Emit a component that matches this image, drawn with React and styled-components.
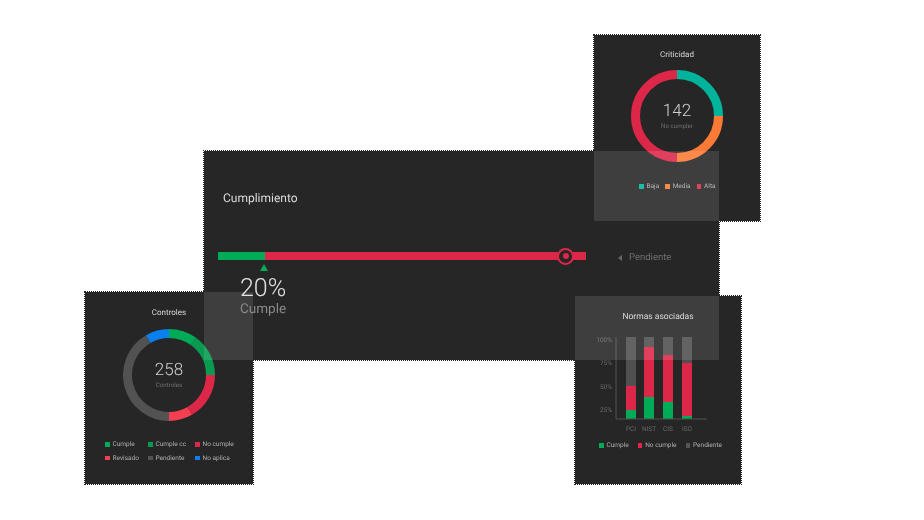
import React from 'react';
import styled, { createGlobalStyle, css } from 'styled-components';

const Global = createGlobalStyle`
  html, body { margin: 0; padding: 0; background: #fff; }
  body {
    font-family: Roboto, "Liberation Sans", sans-serif;
    text-rendering: geometricPrecision;
  }
`;

const soft = css`
  filter: blur(0.3px);
`;

const Stage = styled.div`
  position: relative;
  width: 924px;
  height: 520px;
  overflow: hidden;
  background: #fff;
`;

const Panel = styled.section`
  position: absolute;
  left: ${p => p.$x}px;
  top: ${p => p.$y}px;
  width: ${p => p.$w}px;
  height: ${p => p.$h}px;
  box-sizing: border-box;
  background: #262626;
  outline: 1px dotted #262626;
  display: flex;
  flex-direction: column;
`;

const Glass = styled.div`
  position: absolute;
  left: ${p => p.$x}px;
  top: ${p => p.$y}px;
  width: ${p => p.$w}px;
  height: ${p => p.$h}px;
  background: rgba(255, 255, 255, 0.115);
`;

/* main panel */
const MainBody = styled.div`
  display: flex;
  flex-direction: column;
  padding: 40px 0 0 14px;
`;
const MainTitle = styled.h2`
  ${soft}
  margin: 0 0 0 5px;
  font-size: 12px;
  line-height: 14px;
  font-weight: 400;
  color: #dcdcdc;
`;
const BarRow = styled.div`
  display: flex;
  align-items: flex-start;
  margin-top: 47px;
`;
const Track = styled.div`
  position: relative;
  display: flex;
  width: 368px;
  height: 8px;
  background: #dc2749;
`;
const Done = styled.div`
  width: 47px;
  background: #00ab57;
`;
const Pointer = styled.div`
  position: absolute;
  left: 42px;
  top: 12px;
  width: 0;
  height: 0;
  border-left: 4px solid transparent;
  border-right: 4px solid transparent;
  border-bottom: 7px solid #00ab57;
`;
const Marker = styled.div`
  position: absolute;
  left: 339px;
  top: -4.5px;
  width: 17px;
  height: 17px;
  box-sizing: border-box;
  border-radius: 50%;
  background: #262626;
  border: 2px solid #dc2749;
  display: flex;
  align-items: center;
  justify-content: center;
  &::after {
    content: '';
    width: 6px;
    height: 6px;
    border-radius: 50%;
    background: #dc2749;
  }
`;
const Pending = styled.div`
  ${soft}
  display: flex;
  align-items: center;
  gap: 7px;
  margin: -0.5px 0 0 32px;
  font-size: 9.5px;
  line-height: 12px;
  color: #6f6f6f;
  &::before {
    content: '';
    border-top: 3px solid transparent;
    border-bottom: 3px solid transparent;
    border-right: 4px solid #666;
  }
`;
const Stat = styled.div`
  ${soft}
  position: relative;
  z-index: 1;
  display: flex;
  flex-direction: column;
  gap: 1px;
  margin: 13px 0 0 22px;
`;
const StatValue = styled.div`
  font-size: 25px;
  line-height: 24px;
  font-weight: 300;
  color: #e0e0e0;
`;
const StatLabel = styled.div`
  font-size: 13.5px;
  line-height: 15px;
  color: #8a8a8a;
`;

/* cards */
const CardTitle = styled.h3`
  ${soft}
  margin: 0;
  padding-top: ${p => p.$top}px;
  text-align: center;
  font-size: ${p => p.$size || 8}px;
  line-height: 10px;
  font-weight: 400;
  color: #d8d8d8;
`;
const DonutBox = styled.div`
  position: relative;
  width: 94px;
  height: 94px;
  margin: ${p => p.$m};
`;
const DonutText = styled.div`
  ${soft}
  position: absolute;
  inset: 0;
  display: flex;
  flex-direction: column;
  align-items: center;
  justify-content: center;
`;
const DonutValue = styled.div`
  font-size: 17px;
  line-height: 20px;
  font-weight: 300;
  color: #d0d0d0;
`;
const DonutCaption = styled.div`
  font-size: 6.2px;
  line-height: 10px;
  margin-bottom: 1px;
  color: #6e6e6e;
`;
const Legend = styled.div`
  ${soft}
  display: flex;
  gap: ${p => p.$gap}px;
  margin: ${p => p.$m};
`;
const LegendGrid = styled.div`
  ${soft}
  display: grid;
  grid-template-columns: 43px 47px auto;
  row-gap: 4.7px;
  margin: 18px 0 0 20px;
`;
const LegendItem = styled.div`
  display: flex;
  align-items: center;
  gap: 3px;
  font-size: 6.5px;
  line-height: 9px;
  white-space: nowrap;
  color: #b0b0b0;
  &::before {
    content: '';
    width: 4.5px;
    height: 4.5px;
    flex: none;
    background: ${p => p.$c};
  }
`;
const DonutSvg = styled.svg`
  display: block;
`;
const ChartBox = styled.svg`
  ${soft}
  display: block;
  margin: 15px 0 0 14px;
  overflow: visible;
`;
const Tick = styled.text`
  font-family: Roboto, sans-serif;
  font-size: 6.5px;
  fill: #6a6a6a;
`;

const RAD = Math.PI / 180;
function arc(cx, cy, r, a0, a1) {
  const x0 = cx + r * Math.sin(a0 * RAD), y0 = cy - r * Math.cos(a0 * RAD);
  const x1 = cx + r * Math.sin(a1 * RAD), y1 = cy - r * Math.cos(a1 * RAD);
  return `M${x0} ${y0}A${r} ${r} 0 ${a1 - a0 > 180 ? 1 : 0} 1 ${x1} ${y1}`;
}
function Donut({ segments }) {
  return (
    <DonutSvg width="94" height="94" viewBox="0 0 94 94">
      {segments.map(([a, b, c]) => (
        <path key={a} d={arc(47, 47, 41.5, a, b)} fill="none" stroke={c} strokeWidth="9" />
      ))}
    </DonutSvg>
  );
}

const critSegments = [[0, 90, '#00b49b'], [90, 180, '#fb7a36'], [180, 360, '#dc2749']];
const ctrlSegments = [
  [0, 36, '#00ab57'], [36, 90, '#079a50'], [90, 150, '#dc2749'], [150, 180, '#f43f50'],
  [180, 330, '#525252'], [330, 360, '#0a7ff0'],
];

const bars = [
  { n: 'PCI', x: 10, g: 9, r: 24 },
  { n: 'NIST', x: 28, g: 22, r: 50 },
  { n: 'CIS', x: 47, g: 17, r: 47 },
  { n: 'ISO', x: 66, g: 3, r: 53 },
];
const ticks = [['100%', 5], ['75%', 28], ['50%', 51.5], ['25%', 74.5]];

function StackChart() {
  const bottom = 82;
  return (
    <ChartBox width="130" height="100" viewBox="-27 0 130 100">
      {bars.map(b => (
        <g key={b.n}>
          <rect x={b.x} y={0} width="10" height={bottom} fill="#505050" />
          <rect x={b.x} y={bottom - b.g - b.r} width="10" height={b.r} fill="#dc2749" />
          <rect x={b.x} y={bottom - b.g} width="10" height={b.g} fill="#00ab57" />
        </g>
      ))}
      <path d="M0 0V82H91" fill="none" stroke="#505050" strokeWidth="1" />
      {ticks.map(([t, y]) => (
        <Tick key={t} x="-4" y={y} textAnchor="end">{t}</Tick>
      ))}
      {bars.map(b => (
        <Tick key={b.n} x={b.x + 5} y="93.5" textAnchor="middle">{b.n}</Tick>
      ))}
    </ChartBox>
  );
}

export default function App() {
  return (
    <Stage>
      <Global />
      <Panel $x={204} $y={151} $w={515} $h={209}>
        <MainBody>
          <MainTitle>Cumplimiento</MainTitle>
          <BarRow>
            <Track>
              <Done />
              <Pointer />
              <Marker />
            </Track>
            <Pending>Pendiente</Pending>
          </BarRow>
          <Stat>
            <StatValue>20%</StatValue>
            <StatLabel>Cumple</StatLabel>
          </Stat>
        </MainBody>
      </Panel>

      <Panel $x={594} $y={35} $w={166} $h={186}>
        <CardTitle $top={15}>Criticidad</CardTitle>
        <DonutBox $m="9px 0 0 36px">
          <Donut segments={critSegments} />
          <DonutText>
            <DonutValue>142</DonutValue>
            <DonutCaption>No cumpler</DonutCaption>
          </DonutText>
        </DonutBox>
        <Legend $gap={6} $m="19px 0 0 45px">
          <LegendItem $c="#00b49b">Baja</LegendItem>
          <LegendItem $c="#fb7a36">Media</LegendItem>
          <LegendItem $c="#dc2749">Alta</LegendItem>
        </Legend>
      </Panel>

      <Panel $x={85} $y={292} $w={168} $h={192}>
        <CardTitle $top={16}>Controles</CardTitle>
        <DonutBox $m="10px 0 0 37px">
          <Donut segments={ctrlSegments} />
          <DonutText>
            <DonutValue>258</DonutValue>
            <DonutCaption>Controles</DonutCaption>
          </DonutText>
        </DonutBox>
        <LegendGrid>
          <LegendItem $c="#00ab57">Cumple</LegendItem>
          <LegendItem $c="#079a50">Cumple cc</LegendItem>
          <LegendItem $c="#dc2749">No cumple</LegendItem>
          <LegendItem $c="#f43f50">Revisado</LegendItem>
          <LegendItem $c="#525252">Pendiente</LegendItem>
          <LegendItem $c="#0a7ff0">No aplica</LegendItem>
        </LegendGrid>
      </Panel>

      <Panel $x={575} $y={296} $w={166} $h={188}>
        <CardTitle $top={16} $size={8.5}>Normas asociadas</CardTitle>
        <StackChart />
        <Legend $gap={9} $m="4px 0 0 24px">
          <LegendItem $c="#00ab57">Cumple</LegendItem>
          <LegendItem $c="#dc2749">No cumple</LegendItem>
          <LegendItem $c="#555">Pendiente</LegendItem>
        </Legend>
      </Panel>

      <Glass $x={594} $y={151} $w={125} $h={70} />
      <Glass $x={204} $y={292} $w={49} $h={68} />
      <Glass $x={575} $y={296} $w={144} $h={64} />
    </Stage>
  );
}
